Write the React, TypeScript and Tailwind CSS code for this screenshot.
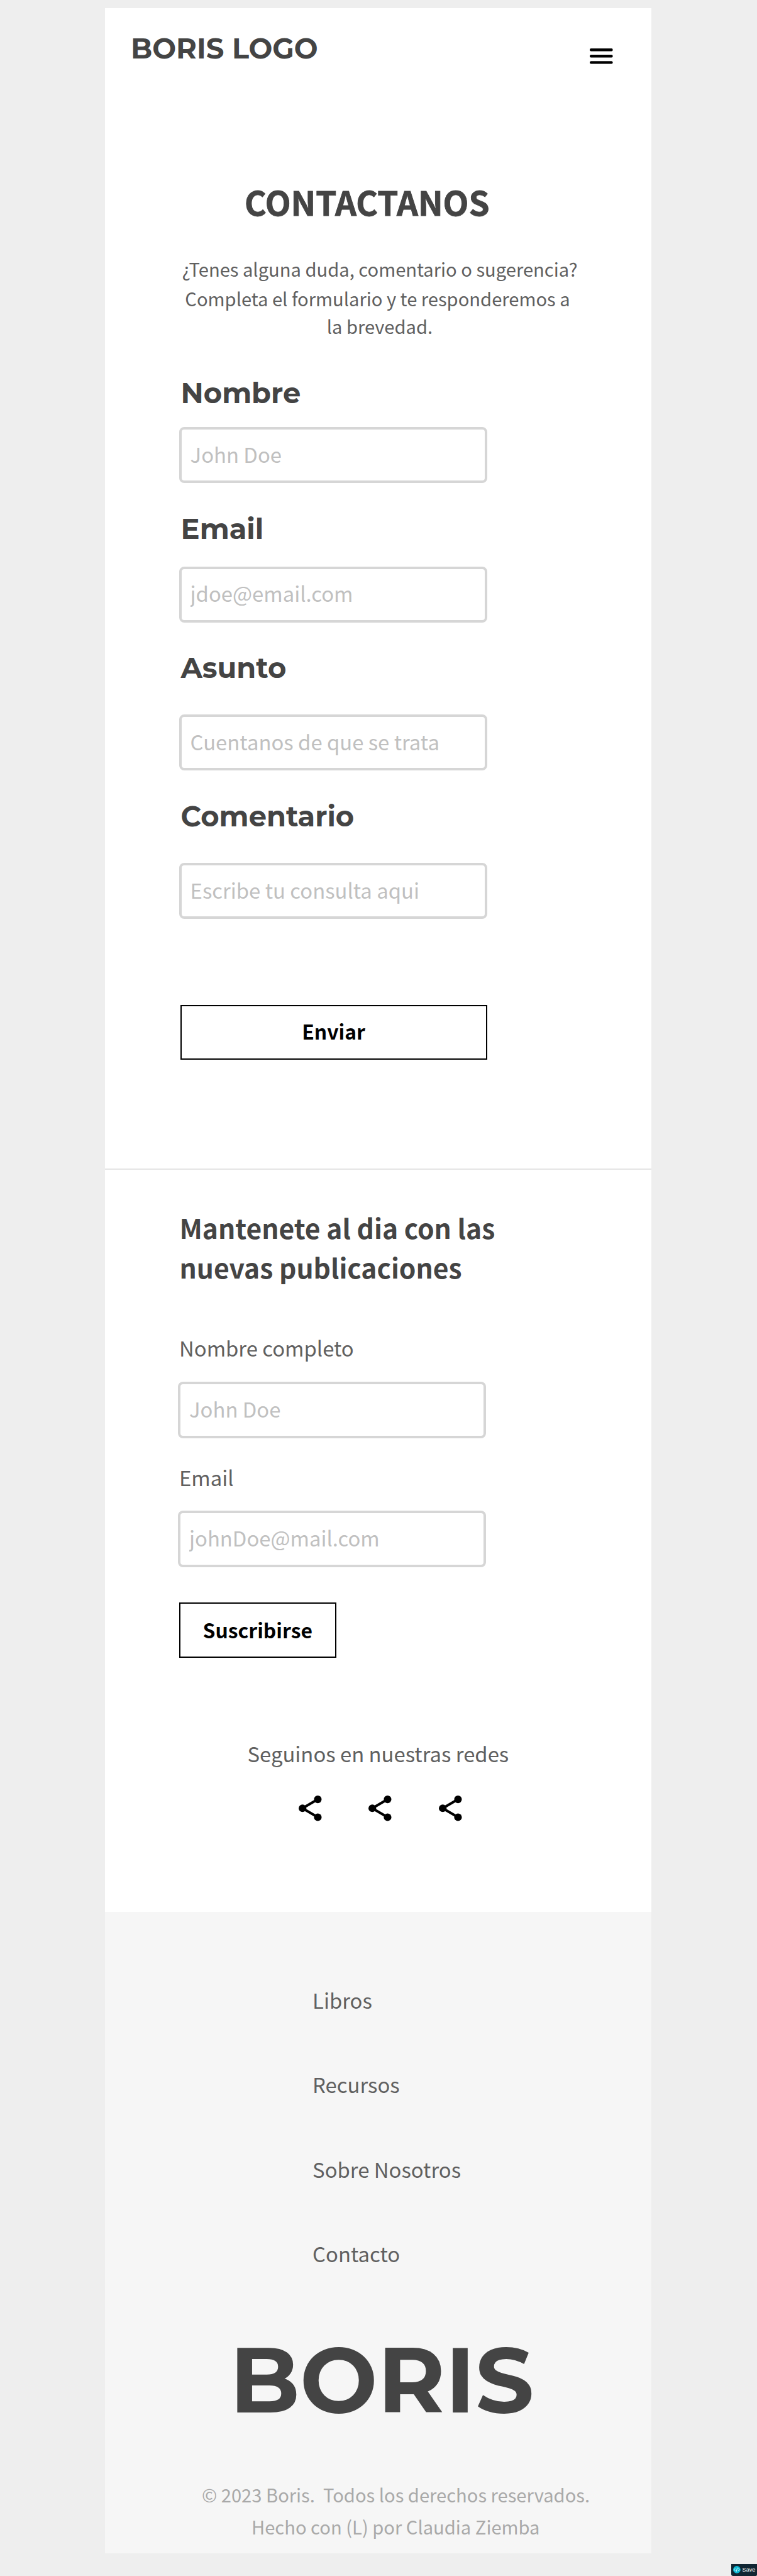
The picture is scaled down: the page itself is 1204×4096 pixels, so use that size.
import React from "react";

function Label({ children, className }: { children: React.ReactNode; className: string }) {
  return (
    <label
      className={`block pl-[3px] pt-[1px] font-['Montserrat','Inter',sans-serif] text-[44.8px] font-bold leading-[55px] text-[#444444] ${className}`}
    >
      {children}
    </label>
  );
}

function Field({ placeholder, className }: { placeholder: string; className: string }) {
  return (
    <input
      type="text"
      placeholder={placeholder}
      className={`block h-[89.3px] w-[490px] rounded-[8px] border-4 border-[#d6d6d6] bg-white pb-[5px] pl-[14px] text-[32.85px] outline-none placeholder:text-[#c0c0c0] placeholder:opacity-100 ${className}`}
    />
  );
}

function MenuIcon() {
  return (
    <svg className="h-[25px] w-[37px]" viewBox="0 0 37 25" aria-hidden="true">
      <rect x="0" y="0" width="36.6" height="4.4" rx="2" />
      <rect x="0" y="10.1" width="36.6" height="4.4" rx="2" />
      <rect x="0" y="20.2" width="36.6" height="4.4" rx="2" />
    </svg>
  );
}

function ShareIcon() {
  return (
    <svg className="h-[48.6px] w-[48.6px]" viewBox="0 0 24 24" aria-hidden="true">
      <path d="M18 5 6 12l12 7" fill="none" stroke="#000" strokeWidth="2" />
      <circle cx="18" cy="5" r="3" />
      <circle cx="6" cy="12" r="3" />
      <circle cx="18" cy="19" r="3" />
    </svg>
  );
}

function SaveBadge() {
  return (
    <div className="absolute bottom-0 right-0 flex h-[19.4px] w-[41.4px] items-center rounded-bl-[3px] rounded-br-[2px] bg-[#102532] pl-[3.5px]">
      <svg className="h-[11.8px] w-[11.8px]" viewBox="0 0 20 20" aria-hidden="true">
        <circle cx="10" cy="10" r="10" fill="#0cb8d4" />
        <path
          d="M6 6.5 2.8 10 6 13.5M14 6.5l3.2 3.5-3.2 3.5M11.4 4.5l-2.8 11"
          fill="none"
          stroke="#fff"
          strokeWidth="1.4"
        />
      </svg>
      <span className="ml-[2.6px] pb-[1px] font-['Liberation_Sans',Arial,sans-serif] text-[9.2px] leading-[12px] text-white">
        Save
      </span>
    </div>
  );
}

const links = ["Libros", "Recursos", "Sobre Nosotros", "Contacto"];

export default function App() {
  return (
    <div className="relative h-[4096px] w-[1204px] overflow-hidden bg-[#eeeeee] pl-[167px] pt-[13px] font-['Noto_Sans_CJK_SC',sans-serif] text-[32.85px] leading-[44px] text-[#606060]">
      <div className="flex h-[4047px] w-[869px] flex-col bg-white">
        <header className="flex h-[274.6px] shrink-0 items-start justify-between pl-[41px] pr-[61px] pt-[35.8px]">
          <div className="whitespace-nowrap font-['Montserrat','Inter',sans-serif] text-[44.8px] font-bold leading-[56px] text-[#444444]">
            BORIS LOGO
          </div>
          <div className="pt-[28px]">
            <MenuIcon />
          </div>
        </header>

        <main className="h-[1570.4px] shrink-0">
          <h1 className="pl-[222px] text-[53px] font-bold leading-[64px] text-[#444444] [-webkit-text-stroke:0.9px_#444444]">
            CONTACTANOS
          </h1>
          <div className="ml-[122px] mt-[53.3px] w-[630px] whitespace-nowrap text-center text-[29.15px] leading-[44.3px]">
            <p className="mb-[2.9px]">¿Tenes alguna duda, comentario o sugerencia?</p>
            <p className="pr-[7px]">Completa el formulario y te responderemos a</p>
            <p>la brevedad.</p>
          </div>

          <form className="ml-[117.6px] mt-[56.2px] flex flex-col items-start">
            <Label className="">Nombre</Label>
            <Field placeholder="John Doe" className="mt-[26.3px]" />
            <Label className="mt-[44.4px]">Email</Label>
            <Field placeholder="jdoe@email.com" className="mt-[32px]" />
            <Label className="mt-[44px]">Asunto</Label>
            <Field placeholder="Cuentanos de que se trata" className="mt-[46px]" />
            <Label className="mt-[44.9px]">Comentario</Label>
            <Field placeholder="Escribe tu consulta aqui" className="mt-[45.7px]" />
            <button
              type="button"
              className="ml-[2px] mt-[136.3px] h-[87.6px] w-[488px] border-2 border-black pb-[4px] text-[31.85px] font-bold text-black"
            >
              Enviar
            </button>
          </form>
        </main>

        <section className="h-[1181.6px] shrink-0 border-t-2 border-[#e5e5e5] pl-[116px] pt-[60.4px]">
          <h2 className="pl-[2.5px] text-[42.6px] font-bold leading-[63px] text-[#444444]">
            Mantenete al dia con las
            <br />
            nuevas publicaciones
          </h2>
          <label className="mt-[75px] block pl-[2px]">Nombre completo</label>
          <Field placeholder="John Doe" className="mt-[32px]" />
          <label className="mt-[39.9px] block pl-[2px]">Email</label>
          <Field placeholder="johnDoe@mail.com" className="mt-[31.9px]" />
          <button
            type="button"
            className="ml-[1.6px] mt-[56.7px] block h-[87.6px] w-[250.3px] border-2 border-black pb-[3px] text-[31.85px] font-bold text-black"
          >
            Suscribirse
          </button>
          <p className="mt-[129.5px] pl-[110.5px]">Seguinos en nuestras redes</p>
          <div className="mt-[41px] flex gap-[63.1px] pl-[185.6px]">
            <ShareIcon />
            <ShareIcon />
            <ShareIcon />
          </div>
        </section>

        <footer className="flex-1 bg-[#f6f6f6] pt-[118.4px]">
          <nav className="flex flex-col gap-[90.3px] pl-[330.1px]">
            {links.map((link) => (
              <a key={link}>{link}</a>
            ))}
          </nav>
          <div className="mt-[99.5px] pl-[198.2px] font-['Montserrat','Inter',sans-serif] text-[146.25px] font-bold leading-[160px] text-[#444444]">
            BORIS
          </div>
          <div className="ml-[154px] mt-[76.2px] w-[616.5px] whitespace-pre text-center text-[29.15px] leading-[51px] text-[#a9a9a9]">
            <p>{"© 2023 Boris.  Todos los derechos reservados."}</p>
            <p>Hecho con (L) por Claudia Ziemba</p>
          </div>
        </footer>
      </div>
      <SaveBadge />
    </div>
  );
}
